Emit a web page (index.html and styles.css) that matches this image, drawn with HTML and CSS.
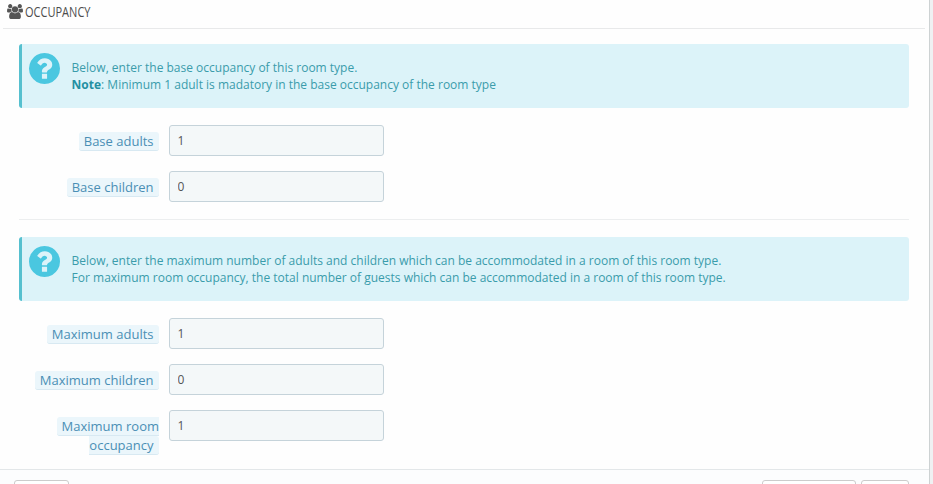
FILE: index.html
```html
<!DOCTYPE html>
<html lang="en">
<head>
<meta charset="utf-8">
<title>Occupancy</title>
<link rel="stylesheet" href="styles.css">
</head>
<body>
<svg class="sprite" aria-hidden="true">
  <symbol id="help" viewBox="128 128 1536 1536"><path d="M1024 1376v-192q0-14-9-23t-23-9h-192q-14 0-23 9t-9 23v192q0 14 9 23t23 9h192q14 0 23-9t9-23zm256-672q0-88-55.500-163t-138.500-116-170-41q-243 0-371 213-15 24 8 42l132 100q7 6 19 6 16 0 25-12 53-68 86-92 34-24 86-24 48 0 85.500 26t37.500 59q0 38-20 61t-68 45q-63 28-115.500 86.500t-52.500 125.500v36q0 14 9 23t23 9h192q14 0 23-9t9-23q0-19 21.500-49.500t54.500-49.500q32-18 49-28.500t46-35 44.500-48 28-60.500 12.500-81zm384 192q0 209-103 385.500t-279.500 279.500-385.500 103-385.500-103-279.500-279.500-103-385.500 103-385.500 279.500-279.500 385.500-103 385.500 103 279.500 279.500 103 385.500z"/></symbol>
</svg>
<main class="panel">
  <h3 class="heading">
    <svg class="users" viewBox="0 0 1920 1792"><path d="M593 896q-162 5-265 128H194q-82 0-138-40.500T0 865q0-353 124-353 6 0 43.500 21t97.500 42.500T384 597q67 0 133-23-5 37-5 66 0 139 81 256zm1071 637q0 120-73 189.500t-194 69.500H523q-121 0-194-69.500T256 1533q0-53 3.500-103.500t14-109T300 1212t43-97.500 62-81 85.500-53.500T602 960q10 0 43 21.500t73 48 107 48 135 21.500 135-21.500 107-48 73-48 43-21.500q61 0 111.500 20t85.500 53.500 62 81 43 97.500 26.500 108.500 14 109 3.500 103.500zM640 256q0 106-75 181t-181 75-181-75-75-181 75-181T384 0t181 75 75 181zm704 384q0 159-112.500 271.500T960 1024 688.500 911.500 576 640t112.500-271.500T960 256t271.500 112.500T1344 640zm576 225q0 78-56 118.500t-138 40.500h-134q-103-123-265-128 81-117 81-256 0-29-5-66 66 23 133 23 59 0 119-21.500t97.500-42.500 43.500-21q124 0 124 353zm-128-609q0 106-75 181t-181 75-181-75-75-181 75-181 181-75 181 75 75 181z"/></svg>
    <span class="title">OCCUPANCY</span>
  </h3>
  <div class="content">
    <div class="alert">
      <svg class="help"><use href="#help"/></svg>
      <p>Below, enter the base occupancy of this room type.<br><b>Note</b>: Minimum 1 adult is madatory in the base occupancy of the room type</p>
    </div>
    <div class="row"><label for="ba"><span>Base adults</span></label><input id="ba" value="1"></div>
    <div class="row"><label for="bc"><span>Base children</span></label><input id="bc" value="0"></div>
    <hr>
    <div class="alert">
      <svg class="help"><use href="#help"/></svg>
      <p>Below, enter the maximum number of adults and children which can be accommodated in a room of this room type.<br>For maximum room occupancy, the total number of guests which can be accommodated in a room of this room type.</p>
    </div>
    <div class="row"><label for="ma"><span>Maximum adults</span></label><input id="ma" value="1"></div>
    <div class="row"><label for="mc"><span>Maximum children</span></label><input id="mc" value="0"></div>
    <div class="row"><label for="mr"><span>Maximum room occupancy</span></label><input id="mr" value="1"></div>
  </div>
  <footer class="footer">
    <button class="cancel" aria-label="Cancel"></button>
    <button class="stay" aria-label="Save and stay"></button>
    <button class="save" aria-label="Save"></button>
  </footer>
</main>
</body>
</html>
```

FILE: styles.css
```css
* { box-sizing: border-box; }
body {
  margin: 0;
  height: 484px;
  overflow: hidden;
  background: #eff1f2;
  font: 12px/17px "Open Sans", sans-serif;
  color: #555;
}
.sprite { display: none; }
.panel {
  width: 930px;
  height: 484px;
  overflow: hidden;
  display: flex;
  flex-direction: column;
  background: #fefefe;
  border-right: 1px solid #cdd2d3;
}
.heading {
  flex: none;
  display: flex;
  align-items: center;
  height: 29px;
  margin: 0 4px 0 3px;
  padding: 0 0 5px 4px;
  border-bottom: 1px solid #e8e9ea;
  font-size: 14.5px;
  font-weight: 400;
  color: #4c4c4c;
}
.users { width: 16px; height: 15px; margin-right: 2px; fill: #555; }
.title { transform: scaleX(.76); transform-origin: left; }
.content { flex: none; height: 440px; padding: 15px 20px 0 19px; }
.alert {
  display: flex;
  height: 64px;
  margin-bottom: 17px;
  padding: 8px 0 0 7px;
  background: #dcf3f9;
  border-left: 3px solid #56c0cf;
  border-radius: 3px;
  color: #3a9cab;
}
.help { flex: none; width: 31px; height: 31px; margin: .5px 12.1px 0 -.5px; fill: #4ac7e0; }
.alert p { margin: 7px 0 0; white-space: nowrap; }
.alert b { color: #2490a2; }
.row { display: flex; height: 31px; margin-bottom: 15px; }
.row label {
  width: 140px;
  margin-right: 10px;
  padding-top: 7px;
  text-align: right;
  font-size: 13px;
  line-height: 19px;
  color: #4a8fb5;
}
.row label span {
  padding: 0 5.5px 0 5px;
  background: #ebf6fb;
  border-bottom: 1px solid #d8e9f2;
  border-radius: 3px;
}
.row input {
  width: 215px;
  height: 31px;
  padding: 0 7.5px;
  border: 1px solid #c5d3da;
  border-radius: 3px;
  background: #f4f8f9;
  font: inherit;
  color: #555;
}
hr { height: 1px; margin: 17px 0; border: 0; background: #eceeef; }
.footer {
  flex: none;
  display: flex;
  height: 60px;
  padding: 10px 20px 0 14px;
  background: #fcfdfe;
  border-top: 1px solid #e3e7e9;
}
.footer button { height: 45px; padding: 0; background: #fff; border: 1px solid #ccc; border-radius: 3px; }
.cancel { width: 55px; }
.stay { width: 94px; margin-left: auto; }
.save { width: 48px; margin-left: 5px; }
```
